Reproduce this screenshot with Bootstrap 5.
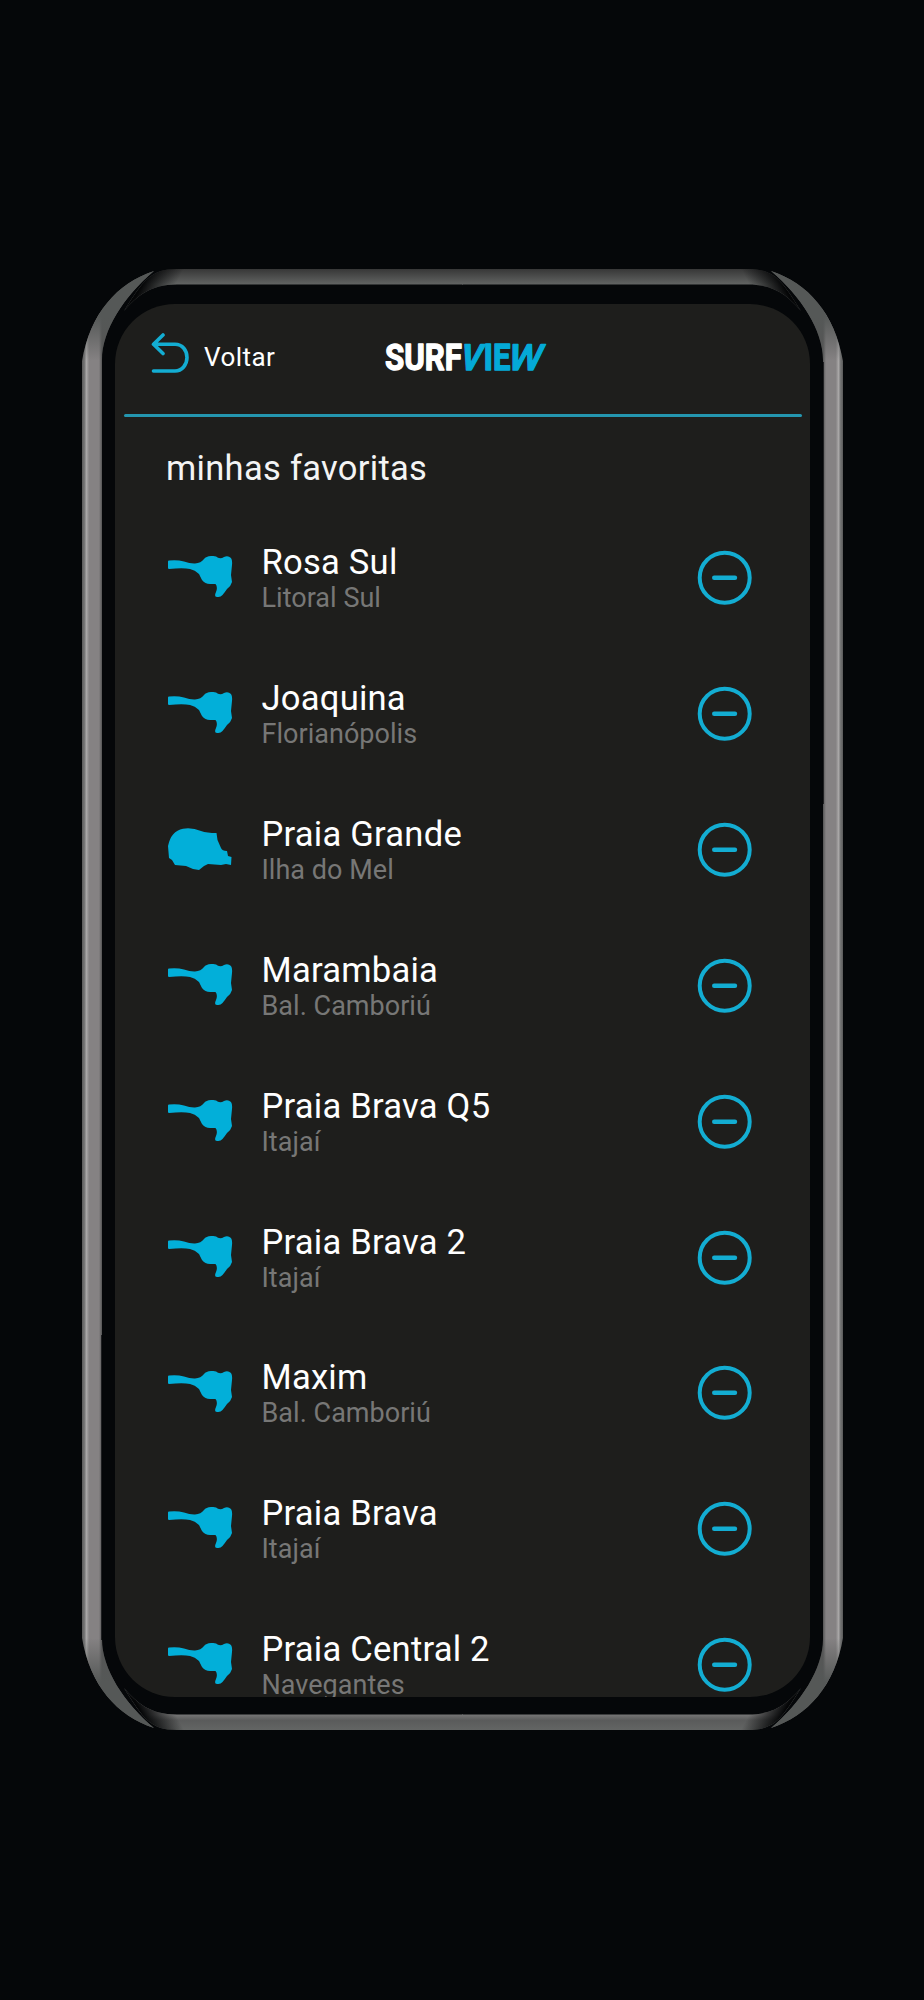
<!DOCTYPE html>
<html lang="pt-BR">
<head>
<meta charset="utf-8">
<meta name="viewport" content="width=device-width, initial-scale=1">
<title>Surfview – minhas favoritas</title>
<link href="https://cdn.jsdelivr.net/npm/bootstrap@5.3.0/dist/css/bootstrap.min.css" rel="stylesheet">
<style>
body{background:#050709;height:2000px;overflow:hidden;font-family:Roboto,"Liberation Sans",sans-serif;color:#fff}
.stage{padding:269px 81px 0 82px}
.phone{width:761px;height:1461px;padding:35px 33px 33px}
.bezel{inset:0;z-index:0}
.screen{z-index:1;width:695px;height:1393px;border-radius:60px;background:#1e1e1c}
.topbar{height:110px;margin:0 8px;padding:0 28px}
.rule{height:3px;margin:0 8px 0 9px;background:#2496af;border-radius:2px}
.back{font-size:26px;letter-spacing:.45px;line-height:30px;padding-top:38px;gap:15px}
.back svg{margin-top:-9px}
.brand{left:267px;top:32px}
.heading{font-size:34.5px;line-height:40px;letter-spacing:.3px;margin:31px 0 42px 51px;font-weight:400;color:#f4f4f4}
.fav{height:135.92px;padding:0 58px 0 53px}
.fav .info{margin-left:27.5px;padding-top:12px}
.name{font-size:34.6px;line-height:40px;letter-spacing:.22px}
.place{font-size:27px;line-height:32px;letter-spacing:.03px;color:#777776}
.state{margin-top:26px}
.remove{margin-top:20px;width:55px;height:55px}
</style>
</head>
<body>
<svg width="0" height="0" class="position-absolute">
<symbol id="sc" viewBox="0 0 66 46"><path fill="#02afd9" d="M0 5.500Q0 4.600 1 4.600Q9 3.600 16 5.600Q22 7.700 27 7.500Q33 7 36 3Q38 .3 43 0Q48-.3 50 1.800Q53 3 56 1Q60-.8 63 2Q64.500 4 64 9L63 19L64 26Q63 30 59 33Q57 36 54.500 39Q52 42 47.500 40.500Q46.500 39 48 36Q50 31 47.500 28L42 28Q37 28 34 24L31 18Q27 14 22 13Q15 11.500 1 13Q0 13 0 11.500Z"/></symbol>
<symbol id="pr" viewBox="0 0 66 46"><path fill="#02afd9" d="M0 18Q3 3 15 .7Q24-.8 33 3Q39 5 48.500 5L49.500 12L53 20Q54 23 59 23L60 28L63.500 29L63 37L58 36L53 37L40 36L36 38L31 42L25 41L18 38L7 37L4 32L1 30Z"/></symbol>
<symbol id="minus" viewBox="0 0 55 55"><circle cx="27.700" cy="27.700" r="25" fill="none" stroke="#13add2" stroke-width="4"/><path d="M17.200 27.700H38" stroke="#13add2" stroke-width="4.400" stroke-linecap="round"/></symbol>
</svg>
<main class="stage">
<div class="phone position-relative">
<svg class="bezel position-absolute" width="761" height="1461" viewBox="0 0 761 1461">
<defs>
<linearGradient id="gt" gradientUnits="userSpaceOnUse" x1="0" y1="0" x2="0" y2="15"><stop offset="0" stop-color="#373737"/><stop offset="1" stop-color="#616362"/></linearGradient>
<linearGradient id="gb" gradientUnits="userSpaceOnUse" x1="0" y1="15" x2="0" y2="0"><stop offset="0" stop-color="#747474"/><stop offset=".35" stop-color="#5a5b5b"/><stop offset="1" stop-color="#636564"/></linearGradient>
<linearGradient id="fs" x1="0" x2="0" y1="0" y2="1"><stop offset="0" stop-color="#555857"/><stop offset=".5" stop-color="#555857"/><stop offset="1" stop-color="#555857" stop-opacity="0"/></linearGradient>
<linearGradient id="cf" gradientUnits="userSpaceOnUse" x1="60" y1="16" x2="86" y2="30"><stop offset="0" stop-color="#050607"/><stop offset="1" stop-color="#050607" stop-opacity="0"/></linearGradient>
<linearGradient id="gs" gradientUnits="userSpaceOnUse" x1="0" y1="0" x2="20" y2="0"><stop offset="0" stop-color="#5a5a5a"/><stop offset=".13" stop-color="#777"/><stop offset=".22" stop-color="#aaa8a8"/><stop offset=".36" stop-color="#858283"/><stop offset=".85" stop-color="#858283"/><stop offset="1" stop-color="#555"/></linearGradient>
<path id="bar" d="M42 42C55 27 68 15.500 95 15.500H381V0H95C68 0 61 12 42 42Z"/>
<g id="side">
<path d="M0 92C8 45 35 14 72 2C42 27 20 61 20 91V731H0Z" fill="url(#gs)"/>
<path d="M0 92C8 45 35 14 72 2C42 27 20 61 20 91Z" fill="url(#fs)"/>
</g>
<g id="upper"><use href="#bar" fill="url(#gt)"/><use href="#bar" fill="url(#cf)"/><use href="#side"/></g>
<g id="lower"><use href="#bar" fill="url(#gb)"/><use href="#bar" fill="url(#cf)"/><use href="#side"/></g>
</defs>
<use href="#upper"/>
<use href="#upper" transform="translate(761 0) scale(-1 1)"/>
<use href="#lower" transform="translate(0 1461) scale(1 -1)"/>
<use href="#lower" transform="translate(761 1461) scale(-1 -1)"/>
<path d="M19.800 1066V1371M741.200 535V93" stroke="#050709" stroke-width="1"/>
</svg>
<section class="screen position-relative overflow-hidden">
<header class="topbar">
<div class="back d-flex">
<svg width="38" height="40" viewBox="0 0 38 40" fill="none" stroke="#13add2" stroke-width="3.600" stroke-linecap="round" stroke-linejoin="round"><path d="M12 2L2.500 11.300L12 20.500M3 11.300H24C31.500 11.300 36 17.500 36 24.600S31 38 24 38H2.500"/></svg>
<span>Voltar</span>
</div>
<svg class="brand position-absolute" width="170" height="45" viewBox="0 0 170 45" font-family="Roboto" font-weight="700" font-size="36" stroke-width="1.300" stroke-linejoin="round"><text x="3" y="34" fill="#fff" stroke="#fff" textLength="77" lengthAdjust="spacingAndGlyphs">SURF</text>
<g fill="#04aad7" stroke="#04aad7"><text transform="translate(76.500 34) skewX(-14)" textLength="21" lengthAdjust="spacingAndGlyphs">V</text><text x="101.500" y="34" textLength="9.500" lengthAdjust="spacingAndGlyphs">I</text><text x="111" y="34" textLength="17.500" lengthAdjust="spacingAndGlyphs">E</text><text transform="translate(124 34) skewX(-14)" font-weight="500" textLength="34" lengthAdjust="spacingAndGlyphs">W</text></g></svg>
</header>
<div class="rule"></div>
<h1 class="heading">minhas favoritas</h1>
<div id="list"></div>
</section>
</div>
</main>
<script>
const beaches=[["Rosa Sul","Litoral Sul"],["Joaquina","Florianópolis"],["Praia Grande","Ilha do Mel","pr"],["Marambaia","Bal. Camboriú"],["Praia Brava Q5","Itajaí"],["Praia Brava 2","Itajaí"],["Maxim","Bal. Camboriú"],["Praia Brava","Itajaí"],["Praia Central 2","Navegantes"]];
document.getElementById("list").innerHTML=beaches.map(([n,p,s="sc"])=>`<article class="fav d-flex"><svg class="state flex-shrink-0" width="66" height="46"><use href="#${s}"/></svg><div class="info"><div class="name">${n}</div><div class="place">${p}</div></div><svg class="remove ms-auto"><use href="#minus"/></svg></article>`).join("");
</script>
<script src="https://cdn.jsdelivr.net/npm/bootstrap@5.3.0/dist/js/bootstrap.bundle.min.js"></script>
</body>
</html>
